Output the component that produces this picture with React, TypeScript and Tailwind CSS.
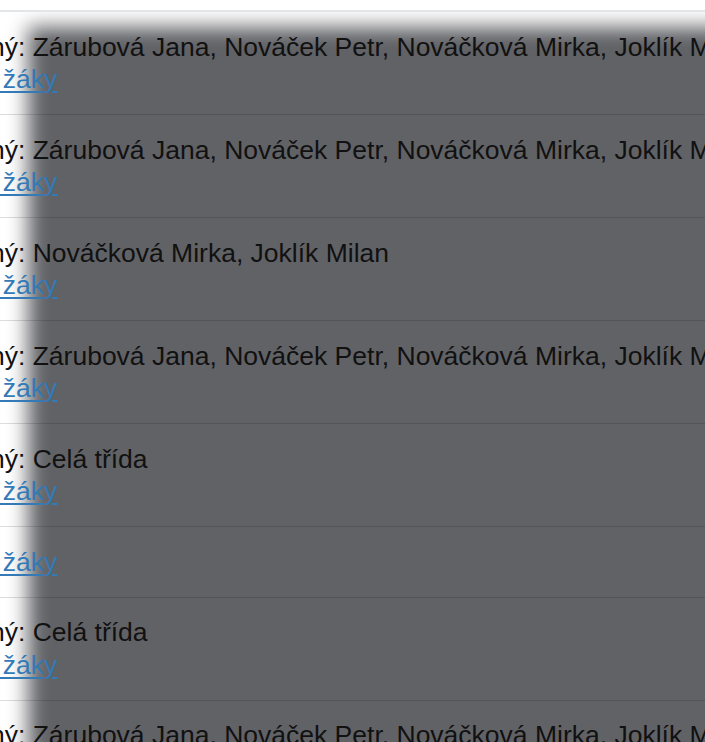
const ALL = 'Zárubová Jana, Nováček Petr, Nováčková Mirka, Joklík Milan, Hrubý Tomáš';

const rows: { assigned: string | null }[] = [
  { assigned: ALL },
  { assigned: ALL },
  { assigned: 'Nováčková Mirka, Joklík Milan' },
  { assigned: ALL },
  { assigned: 'Celá třída' },
  { assigned: null },
  { assigned: 'Celá třída' },
  { assigned: ALL },
];

export default function App() {
  return (
    <div className="relative h-[742px] w-full overflow-hidden bg-white font-['Liberation_Sans',Arial,sans-serif] text-[26.5px] leading-[32.4px]">
      <div className="pt-[10px]">
        <ul className="border-t-2 border-[#e3e6e9]">
          {rows.map((row, i) => (
            <li key={i} className="whitespace-nowrap border-b-[1.6px] border-[#dddddd] py-[18.6px]">
              {row.assigned && (
                <div className="relative z-[2] -ml-[94px] text-[#111]">Přiřazený: {row.assigned}</div>
              )}
              <div className="relative z-[2] -ml-[88.5px]">
                <a href="#" className="text-[#337ab7] underline decoration-[1.6px] underline-offset-[3px]">
                  Upravit žáky
                </a>
              </div>
            </li>
          ))}
        </ul>
      </div>

      {/* dim layer over the list, soft edge on the left and top */}
      <div className="pointer-events-none absolute inset-x-0 top-[12px] bottom-0 z-[1] overflow-hidden">
        <div className="absolute left-[28px] top-[15px] -right-[40px] -bottom-[40px] bg-[rgb(0,2,8)]/[0.62] blur-[10px]" />
      </div>
    </div>
  );
}
